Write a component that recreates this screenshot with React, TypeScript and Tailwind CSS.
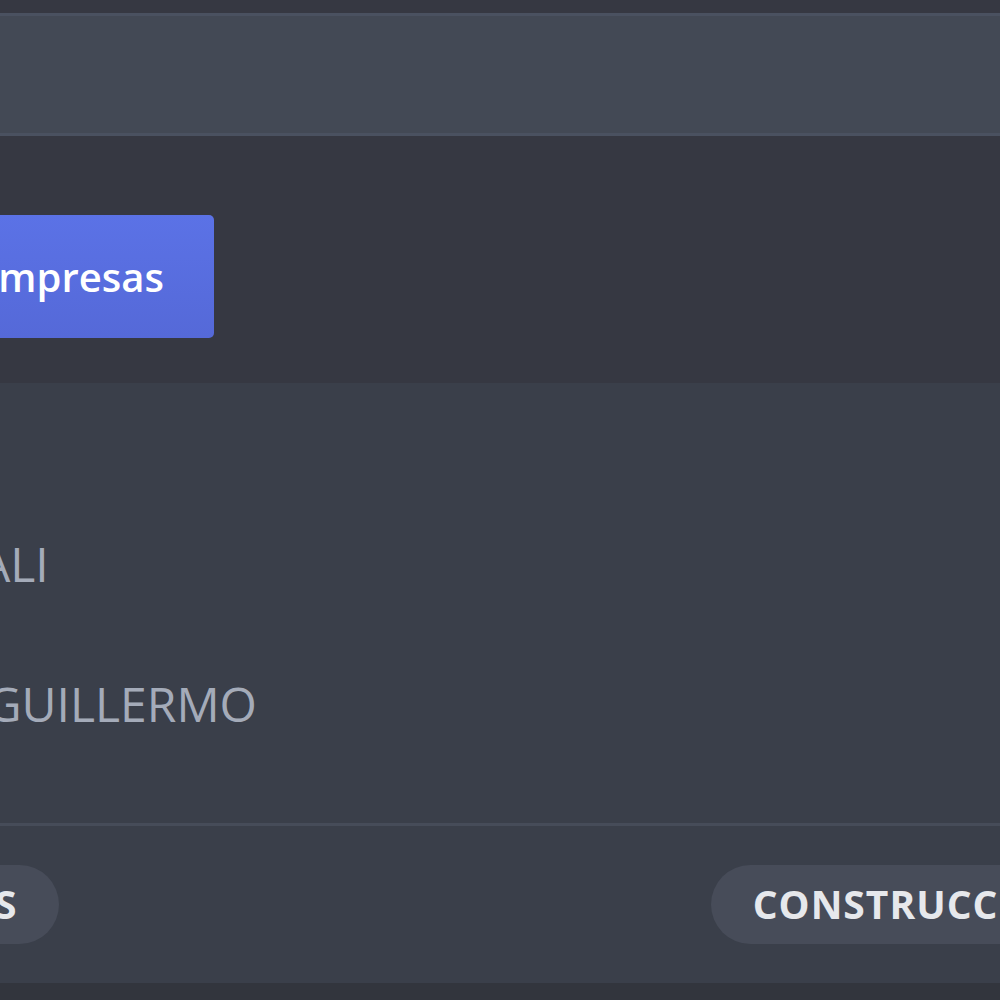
import React from "react";

const names = [
  { text: "NATALI", shift: "-ml-[113px]" },
  { text: "JOSE GUILLERMO", shift: "-ml-[129px]" },
];

export default function App() {
  return (
    <div
      className="w-[1000px] h-[1000px] overflow-hidden bg-[#363842] flex flex-col"
      style={{ fontFamily: "'Open Sans', Lato, sans-serif" }}
    >
      <div className="h-[13px] shrink-0" />

      {/* search bar strip */}
      <div className="h-[123px] shrink-0 bg-[#434955] border-y-[3px] border-[#4a5160]" />

      {/* toolbar */}
      <div className="h-[247px] shrink-0 flex items-center pt-[34px]">
        <button className="-ml-[60px] h-[123px] w-[274px] rounded-[5px] bg-gradient-to-b from-[#5b72e6] to-[#5569d8] text-white text-[40px] font-semibold flex items-center pl-[36px]">
          Empresas
        </button>
      </div>

      {/* list card */}
      <div className="h-[600px] shrink-0 bg-[#3a3f4a] flex flex-col">
        <div className="h-[440px] flex flex-col pt-[157px] gap-[92px] overflow-hidden">
          {names.map((n) => (
            <div key={n.text} className="h-[48px] flex items-center whitespace-nowrap">
              <span className={`${n.shift} text-[48px] leading-none text-[#a4abb9]`}>{n.text}</span>
            </div>
          ))}
        </div>
        <div className="h-[3px] bg-[#464c59]" />
        <div className="flex-1 flex items-center justify-between">
          <span className="-ml-[226px] h-[79px] px-[42px] rounded-full bg-[#474c59] text-[#e6e8ec] text-[39px] font-bold flex items-center whitespace-nowrap">
            EMPRESAS
          </span>
          <span className="-mr-[119px] h-[79px] px-[42px] rounded-full bg-[#474c59] text-[#e6e8ec] text-[39px] font-bold tracking-[1px] flex items-center whitespace-nowrap">
            CONSTRUCCIÓN
          </span>
        </div>
      </div>

      <div className="flex-1 bg-[#32353d]" />
    </div>
  );
}
